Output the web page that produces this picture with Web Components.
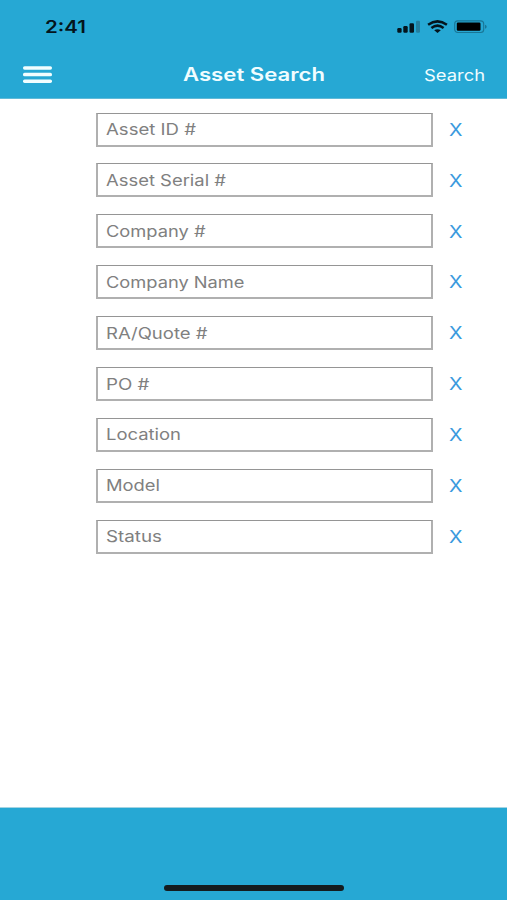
<!DOCTYPE html>
<html lang="en">
<head>
<meta charset="utf-8">
<title>Asset Search</title>
<style>
html, body { margin: 0; height: 100%; background: #fff; }
body { font-family: Inter, "Liberation Sans", sans-serif; overflow: hidden; }
</style>
</head>
<body>
<asset-search-app></asset-search-app>
<script>
const define = (name, html, ready) => {
  const template = document.createElement('template');
  template.innerHTML = html;
  customElements.define(name, class extends HTMLElement {
    connectedCallback() {
      if (this.shadowRoot) return;
      this.attachShadow({ mode: 'open' }).append(template.content.cloneNode(true));
      if (ready) ready(this, this.shadowRoot);
    }
  });
};

// A label in wide letterforms: its text is stretched to the width given in pixels.
define('wide-label', `
<style>
:host { display: block; white-space: nowrap; line-height: 1; }
span { display: inline-block; transform-origin: 0 50%; }
</style><span><slot></slot></span>`, (host, root) => {
  const span = root.querySelector('span');
  const width = Number(host.getAttribute('width'));
  host.style.width = width + 'px';
  span.style.transform = `scaleX(${width / span.getBoundingClientRect().width})`;
});

define('signal-icon', `
<style>:host { display: block; width: 24px; height: 14px; } svg { display: block; }</style>
<svg width="24" height="14" viewBox="0 0 24 14" fill="#04141c">
<rect x="0.3" y="8" width="4.3" height="4.7" rx="1.2"/><rect x="6.3" y="6" width="4.4" height="6.7" rx="1.2"/>
<rect x="12.5" y="3.2" width="4.5" height="9.5" rx="1.2"/><rect x="19" y="0.8" width="4" height="11.9" rx="1.2" fill="#247f9f"/>
</svg>`);

define('wifi-icon', `
<style>:host { display: block; width: 21px; height: 14px; } svg { display: block; }</style>
<svg width="21" height="14" viewBox="0 0 21 14" fill="none" stroke="#04141c" stroke-width="2.5">
<path d="M1.1 4.7Q10.5 -1.9 19.9 4.7"/><path d="M4.4 8Q10.5 3.3 16.6 8"/>
<path d="M7.2 10.3Q10.5 8 13.8 10.3L10.5 12.9Z" fill="#04141c" stroke="none"/>
</svg>`);

define('battery-icon', `
<style>:host { display: block; width: 33px; height: 14px; } svg { display: block; }</style>
<svg width="33" height="14" viewBox="0 0 33 14">
<rect x="0.7" y="0.9" width="29" height="11.6" rx="3" fill="none" stroke="#197696" stroke-width="1.1"/>
<rect x="2.8" y="2.6" width="23.7" height="8.2" rx="1.2" fill="#000"/>
<path d="M31 4.7Q32.7 5 32.7 6.7T31 8.7Z" fill="#197696"/>
</svg>`);

define('status-bar', `
<style>
:host { display: flex; box-sizing: border-box; height: 52px; padding: 18px 20px 0 45px; justify-content: space-between; align-items: flex-start; }
wide-label { font-size: 17px; font-weight: 600; color: #04141c; margin-top: 1px; }
.icons { display: flex; padding-top: 2px; }
wifi-icon { margin: 0 6px 0 6px; }
</style>
<wide-label width="41">2:41</wide-label>
<div class="icons"><signal-icon></signal-icon><wifi-icon></wifi-icon><battery-icon></battery-icon></div>`);

define('menu-button', `
<style>
:host { display: block; width: 29px; height: 18px; }
svg { display: block; }
</style><svg width="29" height="18" viewBox="0 0 29 18" fill="#f1feff">
<rect y="0.2" width="29" height="3.5" rx="1.6"/><rect y="6.8" width="29" height="3.5" rx="1.6"/><rect y="13.4" width="29" height="3.5" rx="1.6"/>
</svg>`);

define('nav-bar', `
<style>
:host { display: grid; grid-template-columns: 160px 241px 60px; align-items: center; box-sizing: border-box; height: 46px; padding: 0 23px; border-bottom: 1px solid #60bad8; color: #f1fdff; }
.title { font-size: 18px; font-weight: 600; margin-top: -1px; }
.action { font-size: 16px; margin-top: -1px; }
menu-button { margin-top: -2px; }
</style>
<menu-button></menu-button>
<wide-label class="title" width="142">Asset Search</wide-label>
<wide-label class="action" width="61">Search</wide-label>`);

define('search-field', `
<style>
:host { display: flex; height: 33px; align-items: center; }
.box { display: flex; align-items: center; box-sizing: border-box; width: 337px; height: 34px; padding: 1.6px 0 0 8px; border: 2px solid #b0b0b0; border-top-width: 1px; border-top-color: #959595; flex: none; }
.box wide-label { font-size: 15.5px; color: #808080; }
.clear { font-size: 17px; color: #3a9ade; margin: 1.6px 0 0 16px; }
</style>
<div class="box"></div><wide-label class="clear" width="13.5">X</wide-label>`, (host, root) => {
  const label = document.createElement('wide-label');
  label.setAttribute('width', host.getAttribute('width'));
  label.textContent = host.getAttribute('placeholder');
  root.querySelector('.box').append(label);
});

define('search-form', `
<style>:host { display: flex; flex-direction: column; gap: 17.9px; padding: 14px 0 0 96px; }</style>
<search-field placeholder="Asset ID #" width="90"></search-field>
<search-field placeholder="Asset Serial #" width="120"></search-field>
<search-field placeholder="Company #" width="99.5"></search-field>
<search-field placeholder="Company Name" width="138.5"></search-field>
<search-field placeholder="RA/Quote #" width="101.5"></search-field>
<search-field placeholder="PO #" width="43.5"></search-field>
<search-field placeholder="Location" width="75"></search-field>
<search-field placeholder="Model" width="54"></search-field>
<search-field placeholder="Status" width="56"></search-field>`);

define('bottom-bar', `
<style>
:host { display: flex; box-sizing: border-box; height: 93px; align-items: flex-end; justify-content: center; padding-bottom: 9px; border-top: 1px solid #a4d4e2; background: #26a8d4; }
i { width: 180px; height: 6px; border-radius: 3px; background: #141c1f; margin-left: 1px; }
</style><i></i>`);

define('asset-search-app', `
<style>
:host { display: flex; flex-direction: column; width: 507px; height: 900px; background: #fff; }
header { background: #26a8d4; height: 99px; box-sizing: border-box; display: flex; flex-direction: column; justify-content: space-between; }
search-form { flex: 1; }
</style>
<header><status-bar></status-bar><nav-bar></nav-bar></header>
<search-form></search-form>
<bottom-bar></bottom-bar>`);
</script>
</body>
</html>
